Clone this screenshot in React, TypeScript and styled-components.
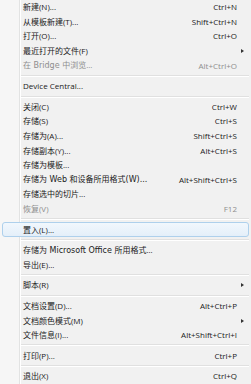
import React from "react";
import styled, { createGlobalStyle } from "styled-components";

const Global = createGlobalStyle`
  html, body { margin: 0; padding: 0; background: #f1f1f1; }
  * { box-sizing: border-box; }
`;

const Menu = styled.div`
  position: relative;
  width: 251px;
  height: 384px;
  overflow: hidden;
  display: flex;
  flex-direction: column;
  background: linear-gradient(to right, #f6f6f6 0, #f6f6f6 19px, #e2e3e3 19px, #e2e3e3 20px, #ffffff 20px, #ffffff 21px, #f1f1f1 21px);
  font-family: "Open Sans", "Noto Sans CJK SC", sans-serif;
  font-size: 8px;
  color: #1a1a1a;
`;

const Item = styled.div<{ $disabled?: boolean; $active?: boolean }>`
  flex: 0 0 14.6px;
  height: 14.6px;
  margin: 0 2px;
  display: grid;
  grid-template-columns: 1fr auto 11px;
  align-items: center;
  padding-left: 20px;
  border: 1px solid ${(p) => (p.$active ? "#aed0ec" : "transparent")};
  border-radius: 3px;
  background: ${(p) =>
    p.$active ? "linear-gradient(to bottom, #f1f7fd, #e4eff9)" : "transparent"};
  color: ${(p) => (p.$disabled ? "#8e8e8e" : "#1a1a1a")};
  white-space: nowrap;
  line-height: 1;
`;

const Label = styled.span``;

const Latin = styled.span`
  font-family: "DejaVu Sans", "Noto Sans CJK SC", sans-serif;
`;

const Shortcut = styled.span`
  text-align: right;
`;

const Arrow = styled.span`
  display: flex;
  justify-content: flex-start;
  padding-left: 4px;
  &::before {
    content: "";
    display: block;
    width: 0;
    height: 0;
    border-top: 2.5px solid transparent;
    border-bottom: 2.5px solid transparent;
    border-left: 3px solid #333;
  }
`;

const Separator = styled.div`
  flex: 0 0 6px;
  height: 6px;
  margin-left: 21px;
  margin-right: 2px;
  display: flex;
  flex-direction: column;
  justify-content: center;
  &::before {
    content: "";
    display: block;
    height: 1px;
    background: #e0e0e0;
  }
  &::after {
    content: "";
    display: block;
    height: 1px;
    background: #ffffff;
  }
`;

type Entry =
  | { sep: true }
  | {
      label: React.ReactNode;
      key?: string;
      sub?: boolean;
      disabled?: boolean;
      active?: boolean;
    };

const entries: Entry[] = [
  { label: "新建(N)...", key: "Ctrl+N" },
  { label: "从模板新建(T)...", key: "Shift+Ctrl+N" },
  { label: "打开(O)...", key: "Ctrl+O" },
  { label: "最近打开的文件(F)", sub: true },
  {
    label: (
      <>
        在<Latin> Bridge </Latin>中浏览...
      </>
    ),
    key: "Alt+Ctrl+O",
    disabled: true,
  },
  { sep: true },
  { label: "Device Central..." },
  { sep: true },
  { label: "关闭(C)", key: "Ctrl+W" },
  { label: "存储(S)", key: "Ctrl+S" },
  { label: "存储为(A)...", key: "Shift+Ctrl+S" },
  { label: "存储副本(Y)...", key: "Alt+Ctrl+S" },
  { label: "存储为模板..." },
  {
    label: (
      <>
        存储为<Latin> Web </Latin>和设备所用格式<Latin>(W)...</Latin>
      </>
    ),
    key: "Alt+Shift+Ctrl+S",
  },
  { label: "存储选中的切片..." },
  { label: "恢复(V)", key: "F12", disabled: true },
  { sep: true },
  { label: "置入(L)...", active: true },
  { sep: true },
  {
    label: (
      <>
        存储为<Latin> Microsoft Office </Latin>所用格式...
      </>
    ),
  },
  { label: "导出(E)..." },
  { sep: true },
  { label: "脚本(R)", sub: true },
  { sep: true },
  { label: "文档设置(D)...", key: "Alt+Ctrl+P" },
  { label: "文档颜色模式(M)", sub: true },
  { label: "文件信息(I)...", key: "Alt+Shift+Ctrl+I" },
  { sep: true },
  { label: "打印(P)...", key: "Ctrl+P" },
  { sep: true },
  { label: "退出(X)", key: "Ctrl+Q" },
];

export default function App() {
  return (
    <>
      <Global />
      <Menu>
        {entries.map((e, i) =>
          "sep" in e ? (
            <Separator key={i} />
          ) : (
            <Item key={i} $disabled={e.disabled} $active={e.active}>
              <Label>{e.label}</Label>
              <Shortcut>{e.key ?? ""}</Shortcut>
              {e.sub ? <Arrow /> : <span />}
            </Item>
          )
        )}
      </Menu>
    </>
  );
}
